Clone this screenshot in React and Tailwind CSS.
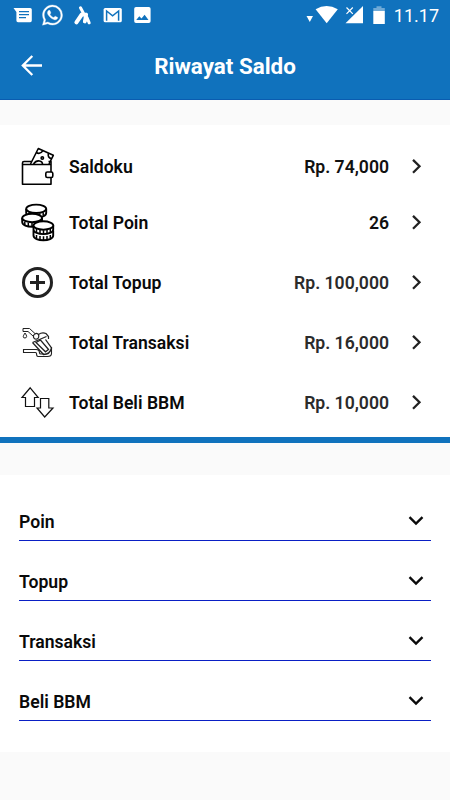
import { useState } from 'react'

// Status bar icons
function StatusBar() {
  return (
    <div className="flex h-8 items-center text-white">
      <svg className="h-8 w-[160px]" viewBox="0 0 160 32" fill="currentColor">
        {/* Messages */}
        <path fillRule="evenodd" d="M13.500 8H30.200A1.600 1.600 0 0 1 31.800 9.600V20.600A1.600 1.600 0 0 1 30.200 22.200H18A1.600 1.600 0 0 1 16.400 20.600V12ZM19 11v1.200h10v-1.200ZM19 14v1.200h10v-1.200ZM19 17v1.200h7v-1.200Z" />
        {/* WhatsApp */}
        <g transform="translate(42.400 5) scale(0.84)" stroke="currentColor" strokeWidth="0.400">
          <path d="M17.47 14.38c-.3-.15-1.76-.87-2.03-.97-.27-.1-.47-.15-.67.15-.2.3-.77.97-.94 1.16-.17.2-.35.23-.64.08-.3-.15-1.26-.46-2.39-1.48-.88-.79-1.48-1.76-1.65-2.06-.17-.3-.02-.46.13-.6.13-.14.3-.35.45-.53.15-.17.2-.3.3-.5.1-.2.05-.37-.03-.52-.07-.15-.67-1.61-.91-2.21-.24-.58-.49-.5-.67-.51h-.57c-.2 0-.52.07-.79.37-.27.3-1.04 1.02-1.04 2.48 0 1.46 1.06 2.88 1.21 3.07.15.2 2.1 3.2 5.08 4.49.71.3 1.26.49 1.69.62.71.23 1.36.2 1.87.12.57-.09 1.76-.72 2.01-1.41.25-.7.25-1.29.17-1.42-.07-.12-.27-.2-.57-.35M12.05 21.8a9.9 9.9 0 0 1-5.03-1.38l-.36-.21-3.74.98 1-3.65-.24-.37a9.86 9.86 0 0 1-1.51-5.26c0-5.45 4.44-9.88 9.89-9.88a9.88 9.88 0 0 1 9.88 9.89c0 5.45-4.44 9.88-9.89 9.88m8.42-18.3A11.8 11.8 0 0 0 12.05 0C5.5 0 .16 5.34.16 11.9c0 2.1.55 4.14 1.59 5.94L.06 24l6.3-1.65a11.9 11.9 0 0 0 5.69 1.44c6.55 0 11.89-5.34 11.89-11.9a11.8 11.8 0 0 0-3.47-8.4" />
        </g>
        {/* Player logo */}
        <g fill="none" stroke="currentColor" strokeLinecap="round">
          <path strokeWidth="3" d="M80.500 7.800L87 20" />
          <path strokeWidth="4" d="M81.800 14.500L76.400 22.300" />
          <path strokeWidth="3.800" d="M86.200 14.500L84.800 21.500" />
          <path strokeWidth="3" d="M87 17.500L89.200 22.800" />
        </g>
        {/* Gmail */}
        <rect x="103.600" y="8" width="18.200" height="14.300" rx="1.600" />
        <path d="M106.600 20.700V11L112.600 15.800L118.600 11V20.700" fill="none" stroke="#1072bd" strokeWidth="1.500" />
        {/* Gallery */}
        <path fillRule="evenodd" d="M136 7h12.800a1.800 1.800 0 0 1 1.800 1.800v12.400a1.800 1.800 0 0 1-1.800 1.800H136a1.800 1.800 0 0 1-1.800-1.800V8.800A1.800 1.800 0 0 1 136 7ZM136.200 20H148.500L144.600 14.800L141.500 18.600L139.300 16.200Z" />
      </svg>
      <svg className="ml-auto h-8 w-[84px] shrink-0" viewBox="305 0 84 32" fill="currentColor">
        <path d="M307.500 16H314L310.800 22Z" />
        <path d="M316.600 9.200Q327.500 2.800 338.800 9.200L327.700 23.300Z" />
        <path d="M364 6V23.200H346.500Z" />
        <path d="M347.300 7.300L354 14M354 7.300L347.300 14" stroke="#1072bd" strokeWidth="3" />
        <path d="M347.500 7.500L353.800 13.800M353.800 7.500L347.500 13.800" stroke="currentColor" strokeWidth="1.200" />
        <path opacity="0.4" d="M374.300 8H377.500V6.200H382.500V8H385.800V11H374.300Z" />
        <path d="M374.300 11H385.800V24H374.300Z" />
      </svg>
      <span className="mr-[11px] ml-[6px] shrink-0 text-[18px] leading-8">11.17</span>
    </div>
  )
}

function WalletIcon() {
  return (
    <svg className="h-[50px] w-[60px]" viewBox="0 0 60 50" fill="none" stroke="#000" strokeWidth="1.600" strokeLinejoin="round">
      <path d="M20.500 24L28.300 8.500L43.300 15.300L39 24" />
      <path d="M26.200 12.500Q30 15 33 10.600M38.500 13.200Q37 17.500 41.800 18.800M23.500 24Q26 20.300 29.500 21Q32.500 21.600 32.500 24" />
      <circle cx="32.300" cy="18" r="1.200" />
      <path d="M21.500 21.500H14Q12.500 21.500 12.500 23V44.300H41V37.800M41 32V24.500H13M38.500 21.500H41V25" />
      <rect x="35.800" y="32" width="7" height="5.500" rx="1.500" />
    </svg>
  )
}

function CoinsIcon() {
  return (
    <svg className="h-[50px] w-[60px]" viewBox="0 0 60 50" fill="#fff" stroke="#000" strokeWidth="1.900">
      <path d="M16.200 14V18C16.200 24 36.200 24 36.200 18V14" />
      <ellipse cx="26.200" cy="13.800" rx="10" ry="4.200" />
      <path strokeWidth="1.500" d="M19 17.500V20.500M22.500 18.500V21.500M26 18.700V22M29.700 18.500V21.500M33.200 17.500V20.500" />
      <path d="M12.200 23V27C12.200 33.300 32 33.300 32 27V23" />
      <ellipse cx="22.100" cy="23" rx="9.900" ry="4.200" />
      <path strokeWidth="1.500" d="M14.800 26.800V30M18.300 27.800V31.200M22 28V31.500M25.500 27.800V31" />
      <path d="M23.500 35.500V40.500C23.500 46.800 43.200 46.800 43.200 40.500V35.500" />
      <path strokeWidth="1.500" d="M26.500 40V43.500M30 41V44.700M33.500 41.300V45M37 41V44.700M40.300 40V43.500" />
      <path d="M23.500 30.500V34.500C23.500 40.700 43.200 40.700 43.200 34.500V30.500" />
      <ellipse cx="33.400" cy="30.500" rx="9.900" ry="4.200" />
      <path strokeWidth="1.500" d="M26.500 34V37.500M30 35V38.500M33.500 35.300V39M37 35V38.500M40.300 34V37.500" />
    </svg>
  )
}

function TopupIcon() {
  return (
    <svg className="h-[50px] w-[60px]" viewBox="0 0 60 50" fill="none" stroke="#222">
      <circle cx="27.500" cy="24.500" r="14" strokeWidth="3" />
      <path strokeWidth="3" d="M27.500 17V32M20 24.500H35" />
    </svg>
  )
}

function FuelIcon() {
  return (
    <svg className="h-[50px] w-[60px]" viewBox="0 0 60 50" fill="none" stroke="#222" strokeWidth="1">
      <path d="M13 10.500H19.500L25.500 16M13 13.500H18L23 18M13 10.500V13.500" />
      <path d="M15 15Q11.500 20 15 20Q18.300 19.500 15 15Z" />
      <path strokeWidth="1.200" d="M23.500 17.500Q25.500 14 28.500 16.500Q29.500 20 27 21Q23 21.500 23.500 17.500ZM28.500 16.500Q32 14 36 15.500L38.500 18.500V21" />
      <path strokeWidth="1.300" d="M22.500 24.500L36.500 18.500M22.500 24.500L33.500 36.500Q40 36.500 41.500 30L35.500 21.500" />
      <path strokeWidth="1.300" d="M26 24.500L30.500 22L38.500 31.500L35.500 33.800Z" />
      <path strokeWidth="1.100" d="M41.500 29V35.500Q41.500 38.500 37.500 38.500H28Q26.500 38.500 26.500 35.500Q26.500 34.500 25.500 34.500H13.500V31.500H26Q29.500 31.500 29.500 35Q29.500 36 31 36H34" />
    </svg>
  )
}

function ArrowsIcon() {
  return (
    <svg className="h-[50px] w-[60px]" viewBox="0 0 60 50" fill="none" stroke="#111" strokeWidth="1.200">
      <path d="M20.200 9.800L28.200 19.500H24.500V28.500H15.500V19.500H12Z" />
      <path d="M30.500 20.500H38.800V30H43L34.700 39L27 30H30.500Z" />
    </svg>
  )
}

const summary = [
  { label: 'Saldoku', value: 'Rp. 74,000', icon: <WalletIcon />, row: 'h-14', tone: 'text-[#111]', iconPos: '-mt-1' },
  { label: 'Total Poin', value: '26', icon: <CoinsIcon />, row: 'h-14', tone: 'text-[#111]', iconPos: '-mt-1.5' },
  { label: 'Total Topup', value: 'Rp. 100,000', icon: <TopupIcon />, row: 'mt-0.5 h-15', tone: 'text-[#2b2b2b]', iconPos: '' },
  { label: 'Total Transaksi', value: 'Rp. 16,000', icon: <FuelIcon />, row: 'h-15', tone: 'text-[#2b2b2b]', iconPos: '' },
  { label: 'Total Beli BBM', value: 'Rp. 10,000', icon: <ArrowsIcon />, row: 'h-15', tone: 'text-[#2b2b2b]', iconPos: '' },
]

const sections = ['Poin', 'Topup', 'Transaksi', 'Beli BBM']

function SummaryRow({ item }) {
  return (
    <div className={`flex items-center pl-2.5 ${item.row}`}>
      <div className={`w-[59px] shrink-0 ${item.iconPos}`}>{item.icon}</div>
      <span className="text-[#0a0a0a]">{item.label}</span>
      <span className={`ml-auto ${item.tone}`}>{item.value}</span>
      <svg className="mr-[25px] ml-[20px] h-5 w-4 shrink-0" viewBox="0 0 16 20" fill="none" stroke="#222" strokeWidth="2.300">
        <path d="M4 2.900L10.500 9.300L4 15.700" />
      </svg>
    </div>
  )
}

export default function App() {
  const [open, setOpen] = useState(null)

  return (
    <div className="h-[800px] w-[450px] overflow-hidden bg-[#fafafa] font-['Roboto',sans-serif]">
      {/* Header */}
      <header className="h-[100px] border-b border-[#0a5cb0] bg-[#1072bd]">
        <StatusBar />
        <div className="grid h-[67px] grid-cols-[64px_1fr_64px] items-center text-white">
          <svg className="ml-5 h-6 w-6" viewBox="0 0 24 24" fill="none" stroke="currentColor" strokeWidth="2.300">
            <path d="M22 11.500H2.800M12.300 2L2.800 11.500L12.300 21" />
          </svg>
          <h1 className="pt-0.5 text-center text-[22.4px] leading-none font-bold">Riwayat Saldo</h1>
        </div>
      </header>

      {/* Balance summary */}
      <section className="mt-[25px] h-[318px] border-b-6 border-[#1072bd] bg-white pt-3.5 text-[17.6px] leading-[26px] font-semibold">
        {summary.map((item) => (
          <SummaryRow key={item.label} item={item} />
        ))}
      </section>

      {/* History sections */}
      <section className="mt-8 h-[277px] bg-white px-[19px] pt-1.5 text-[17.6px] leading-[27px] font-semibold text-[#0a0a0a]">
        {sections.map((name) => (
          <button
            key={name}
            onClick={() => setOpen(open === name ? null : name)}
            className="flex h-15 w-full items-end justify-between border-b border-[#0a1fc4] pb-1"
          >
            <span>{name}</span>
            <svg className="mr-1.5 mb-[5px] h-5 w-[18px]" viewBox="0 0 18 20" fill="none" stroke="currentColor" strokeWidth="2.400">
              <path d="M2.500 6.200L9 12.500L15.500 6.200" />
            </svg>
          </button>
        ))}
      </section>
    </div>
  )
}
